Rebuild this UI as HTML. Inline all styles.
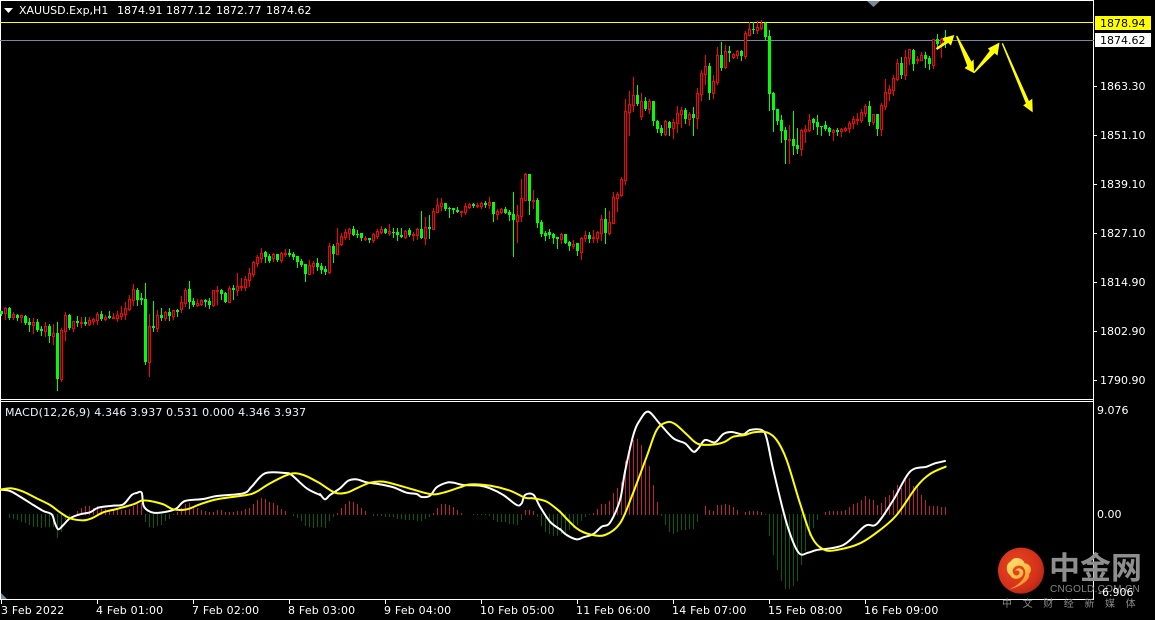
<!DOCTYPE html>
<html><head><meta charset="utf-8"><style>
html,body{margin:0;padding:0;background:#000;width:1155px;height:620px;overflow:hidden}
svg{display:block}
text{font-family:"DejaVu Sans","Liberation Sans",sans-serif;font-size:11px;fill:#fff}
.l{font-family:"Noto Sans CJK SC","Liberation Sans",sans-serif}
.t{letter-spacing:.2px}
</style></head><body>
<svg id="s" xmlns="http://www.w3.org/2000/svg" width="1155" height="620" viewBox="0 0 1155 620">
<rect width="1155" height="620" fill="#000"/>
<g fill="#fff" shape-rendering="crispEdges">
<rect x="0" y="0" width="1094" height="1"/>
<rect x="0" y="0" width="1" height="600"/>
<rect x="1093" y="0" width="1" height="600"/>
<rect x="0" y="399" width="1094" height="1"/>
<rect x="0" y="401" width="1094" height="1"/>
<rect x="0" y="599" width="1094" height="1"/>
<rect x="1094" y="86" width="3" height="1"/><rect x="1094" y="135" width="3" height="1"/><rect x="1094" y="184" width="3" height="1"/><rect x="1094" y="233" width="3" height="1"/><rect x="1094" y="282" width="3" height="1"/><rect x="1094" y="331" width="3" height="1"/><rect x="1094" y="380" width="3" height="1"/>
<rect x="1" y="600" width="1" height="4"/><rect x="97" y="600" width="1" height="4"/><rect x="193" y="600" width="1" height="4"/><rect x="289" y="600" width="1" height="4"/><rect x="385" y="600" width="1" height="4"/><rect x="481" y="600" width="1" height="4"/><rect x="577" y="600" width="1" height="4"/><rect x="673" y="600" width="1" height="4"/><rect x="769" y="600" width="1" height="4"/><rect x="865" y="600" width="1" height="4"/>
</g>
<rect x="0" y="22" width="1094" height="1" fill="#ffff00" shape-rendering="crispEdges"/>
<rect x="0" y="40" width="1094" height="1" fill="#778899" shape-rendering="crispEdges"/>
<polygon points="867,1 880,1 873.5,7" fill="#778899"/>
<polygon points="1,593 1,599 7,599" fill="#778899"/>
<g id="hist" shape-rendering="crispEdges"></g>
<g id="candles" shape-rendering="crispEdges"></g>

<g fill="none" stroke-linejoin="round" stroke-linecap="round">
<g transform="translate(0,395) scale(.33333)" stroke-width="6">
<polyline stroke="#fff" points="0,284 30,288 60,305 100,330 130,348 155,358 165,385 175,403 190,390 210,370 240,358 270,352 295,338 340,332 370,328 395,300 410,294 425,293 432,335 460,353 500,350 530,340 555,318 610,312 650,303 730,295 755,275 795,235 855,234 875,240 920,280 960,300"/>
<polyline stroke="#ff0" points="0,284 35,280 70,290 110,310 150,330 180,352 210,370 250,376 275,370 310,352 350,342 400,328 425,317 450,318 490,328 520,343 560,343 600,328 650,313 740,300 770,290 810,265 870,237 910,240 960,265"/>
</g>
<g transform="translate(320,450) scale(.33333)" stroke-width="6">
<polyline stroke="#fff" points="0,132 15,148 30,135 60,115 85,92 110,88 140,97 180,103 220,112 260,128 290,132 305,141 330,137 350,112 380,98 400,98 430,105 480,107 510,115 550,135 590,165 605,160 615,135 640,134 660,170 690,215 720,238"/>
<polyline stroke="#ff0" points="0,100 45,128 80,128 110,115 150,98 190,95 250,110 330,132 370,128 420,112 450,103 510,107 570,122 615,143 640,145 680,155 720,185"/>
</g>
<g transform="translate(560,400) scale(.33333)" stroke-width="6">
<polyline stroke="#fff" points="0,387 20,405 50,418 70,412 100,402 125,380 150,368 180,300 195,215 220,105 240,60 265,35 300,72 340,115 375,130 400,155 415,145 435,120 465,127 490,102 515,96 550,103 570,90 605,90 620,115 640,210 680,370 715,457 745,458 770,450 850,435 915,378 950,372 1000,300 1050,215 1100,200 1125,190 1155,183"/>
<polyline stroke="#ff0" points="0,335 50,385 90,403 135,405 180,370 215,290 260,170 290,90 320,67 345,72 380,103 415,132 465,133 495,125 520,110 555,105 580,97 620,97 650,120 680,180 720,310 755,410 790,448 830,450 900,430 960,390 1010,345 1070,260 1110,222 1157,200"/>
</g>
</g>

<g transform="translate(900,0) scale(.33333)" fill="#ffff00" stroke="#ff0" stroke-width="4" stroke-linejoin="miter">
<polygon points="110,145 136,126 130,116 160,108 152,133 145,126 112,147"/>
<polygon points="170,108 214,188 219,183 220,216 197,204 204,198"/>
<polygon points="222,218 272,152 267,146 296,131 291,163 284,157"/>
<polygon points="307,130 386,306 395,300 396,333 373,316 380,311"/>
</g>

<polygon points="4,8 13,8 8.5,13" fill="#fff"/>
<text x="19" y="14">XAUUSD.Exp,H1</text>
<text x="117" y="14">1874.91</text><text x="166" y="14">1877.12</text><text x="216" y="14">1872.77</text><text x="266" y="14">1874.62</text>
<text x="5" y="416" style="letter-spacing:.16px;fill:#e8f4ff">MACD(12,26,9) 4.346 3.937 0.531 0.000 4.346 3.937</text>

<rect x="1095" y="16" width="56" height="14" fill="#ffff00"/>
<text x="1100" y="27" style="fill:#000">1878.94</text>
<rect x="1095" y="33" width="56" height="14" fill="#fff"/>
<text x="1100" y="44" style="fill:#000">1874.62</text>
<text x="1100" y="90">1863.30</text>
<text x="1100" y="139">1851.10</text>
<text x="1100" y="188">1839.10</text>
<text x="1100" y="237">1827.10</text>
<text x="1100" y="286">1814.90</text>
<text x="1100" y="335">1802.90</text>
<text x="1100" y="384">1790.90</text>
<text x="1097" y="414">9.076</text>
<text x="1097" y="518">0.00</text>

<text class="t" x="1" y="614">3 Feb 2022</text>
<text class="t" x="96" y="614">4 Feb 01:00</text>
<text class="t" x="192" y="614">7 Feb 02:00</text>
<text class="t" x="288" y="614">8 Feb 03:00</text>
<text class="t" x="384" y="614">9 Feb 04:00</text>
<text class="t" x="480" y="614">10 Feb 05:00</text>
<text class="t" x="576" y="614">11 Feb 06:00</text>
<text class="t" x="672" y="614">14 Feb 07:00</text>
<text class="t" x="768" y="614">15 Feb 08:00</text>
<text class="t" x="864" y="614">16 Feb 09:00</text>

<defs>
<radialGradient id="rg" cx=".4" cy=".4" r=".7"><stop offset="0" stop-color="#e8481e"/><stop offset=".7" stop-color="#d4301a"/><stop offset="1" stop-color="#a82414"/></radialGradient>
<linearGradient id="yg" x1="0" y1="0" x2=".6" y2="1"><stop offset="0" stop-color="#ffe27a"/><stop offset=".6" stop-color="#fbbf45"/><stop offset="1" stop-color="#ef8a22"/></linearGradient>
</defs>
<g transform="translate(960,530) scale(.33333)">
<circle cx="183" cy="122" r="69" fill="url(#rg)"/>
<path fill="url(#yg)" d="M145,178 C180,172 212,150 207,132 C220,120 210,100 194,100 C188,82 160,78 152,95 C138,100 136,125 150,135 C158,152 185,150 190,130 C192,114 170,110 166,122 C178,118 182,128 176,134 C168,140 158,134 158,122 C160,108 180,102 190,112 C200,124 196,140 185,152 C173,166 158,174 145,178 Z"/>
</g>
<text class="l" x="1049" y="579" style="font-family:'Noto Sans CJK SC','Liberation Sans',sans-serif;font-size:31px;font-weight:700;fill:#8e8e8e">中金网</text>
<text x="1050" y="592" style="font-family:'Liberation Sans',sans-serif;font-size:10px;letter-spacing:.3px;fill:#858585">CNGOLD.COM.CN</text>
<text x="1098" y="596">-6.906</text>
<text class="l" x="1002" y="607" style="font-family:'Noto Sans CJK SC','Liberation Sans',sans-serif;font-size:10px;letter-spacing:10.6px;fill:#8a8a8a">中文财经新媒体</text>
</svg>
<script>
var NS="http://www.w3.org/2000/svg",C=document.getElementById("candles"),H=document.getElementById("hist");
function R(p,x,y,w,h,f){if(h<=0)return;var r=document.createElementNS(NS,"rect");r.setAttribute("x",x);r.setAttribute("y",y);r.setAttribute("width",w);r.setAttribute("height",h);r.setAttribute("fill",f);p.appendChild(r)}
var S=[
[0,270,"g122,124,133,136 r112,115,130,148 g111,114,143,146 r125,132,141,148 g133,136,144,150 r135,136,140,156 g136,138,159,162 g144,156,165,183 r143,156,165,189 g148,156,179,183 g168,177,183,195 r155,168,183,197 g162,168,198,216 r162,190,197,222 g156,189,327,360 r175,180,327,333 r126,135,182,210 g132,135,174,177 r153,153,173,183 g138,153,159,168 r141,157,159,172 g141,156,162,165 r141,150,162,165 r144,147,153,162 r126,132,150,162 g123,132,147,150 r136,141,146,150 g123,138,144,144 r129,141,142,144 r123,135,144,153 r108,129,138,147 r96,114,132,147 r75,87,117,120 r42,57,90,105 g54,60,90,105 g69,84,90,102 g39,87,276,282 r132,168,276,318 g93,168,175,183 r120,135,174,183 g114,135,144,150 r123,126,144,150 g114,126,138,150 r120,120,138,147 g117,120,126,138 r78,96,117,126 r54,60,99,108 g33,57,96,114 g84,93,105,108 r87,99,105,108 r87,90,102,105 g87,90,96,108 g84,93,105,114 r60,60,105,108 r48,60,62,102 g57,60,72,87 g66,69,96,96 r48,54,96,96 g45,54,60,87 r9,48,60,75"],
[60,180,"r295,319,320,330 r288,298,320,330 r265,280,300,318 r243,247,282,288 r225,232,248,258 r205,220,234,245 g213,216,231,246 g222,228,243,246 r218,222,234,243 g222,222,240,243 r216,219,240,246 r207,219,220,228 g207,219,225,228 g216,222,231,237 g228,228,246,261 g237,243,255,258 g252,252,282,303 r240,255,282,282 r243,249,258,279 g234,249,261,270 g249,258,270,279 g258,267,276,282 r189,198,276,279 g192,198,222,246 r144,189,222,222 r160,168,192,195 r147,156,171,177 r144,147,159,177 g138,147,165,165 g150,162,165,171 g159,159,174,180 r168,174,176,180 g174,174,180,186 r159,162,180,186 r147,153,168,174 r138,147,156,159 g144,147,159,159 r132,153,158,165 g144,156,159,171 g144,156,165,180 g144,165,171,171 r150,153,171,174 g144,150,165,168 r156,162,165,180 r144,147,165,177 g93,147,174,174 r111,141,174,192 g105,141,147,174 r84,93,147,147 r54,75,96,96 r54,69,78,90 g69,69,87,90 g81,84,87,111 g84,84,90,99 g81,90,96,96 r93,93,95,108 r69,78,96,102 r69,72,81,84 g69,72,78,81 r69,74,76,81 r66,69,78,84 g63,69,75,81 r51,66,75,84 g66,66,102,123 r87,93,102,117"],
[125,160,"r144,147,156,159 g141,147,159,159 g150,156,165,180 g96,162,180,288 r135,165,183,246 r57,114,168,183 r39,42,120,120 g42,42,123,162 r90,120,122,144 g114,120,189,201 g180,186,222,228 g213,219,228,240 g207,216,225,234 g219,222,234,249 g231,231,237,264 r219,222,237,249 g222,222,249,249 g243,246,258,270 r240,252,258,264 g249,249,273,285 r231,234,276,297 r213,225,234,243 g216,225,237,246 r210,232,233,246 r213,216,234,246 r165,177,219,240 g144,177,219,249 r153,186,219,222 r96,111,189,189 r96,102,114,153 r51,57,105,108"],
[156,10,"r267,303,510,522 r243,282,306,375 r201,255,285,303 g225,255,282,285 r249,273,318,327 g261,273,297,300 r267,273,297,309 g273,273,333,345 g330,333,357,366 g345,354,369,375 r330,333,372,375 g333,336,354,375 r327,336,354,384 r288,309,339,366 r291,300,312,351 g294,300,327,339 r306,312,327,345 g291,312,324,375 r234,249,324,354 r180,189,252,270 r135,168,192,222 g159,168,249,267 r195,213,249,264 r111,135,216,222 g96,135,174,180 r105,123,171,174 g108,123,129,153 r129,132,141,144 r120,123,135,144 g120,123,138,150 r63,69,138,144 r36,57,75,75 g36,57,60,69 r33,51,60,69 r30,39,54,57 g36,39,81,87 g60,78,252,300 g246,249,300,363 g297,297,333,342 g315,330,363,396 g351,360,390,459 r345,387,389,459 g303,387,408,432 g354,405,417,429 r357,360,417,435 r345,357,363,396 r312,330,360,363 g324,327,339,357 g315,336,351,372 g348,348,351,375 g333,345,357,360 g351,354,366,375 r357,360,366,390 g354,360,366,375"],
[210,40,"r264,267,273,288 r261,264,270,273 r243,249,265,276 r228,237,250,264 r219,238,239,252 r207,216,240,246 r192,198,219,228 g183,198,246,255 r222,222,246,252 g222,222,267,285 r189,195,267,285 r117,156,198,207 r135,147,159,180 r105,114,150,165 r57,69,117,120 g51,69,105,114 r30,51,105,117 r27,28,54,72 g27,30,72,90 r48,57,58,69 r36,45,60,60 g36,45,57,81 g48,54,72,87"],
[233,0,"r118,118,195,205 g102,118,132,145 r113,118,130,172 g90,112,120,142"]
];
S.forEach(function(s){s[2].split(" ").forEach(function(c,k){
 var i=s[0]+k,red=c[0]=="r",v=c.slice(1).split(",").map(function(n){return Math.round(s[1]+n/3)});
 var col=red?"#ff0000":"#00ff00",x=4*i,h=v[0],t=v[1],b=Math.max(v[2],v[1]+1),l=Math.max(v[3],b);
 R(C,x+1,h,1,t-h,col);R(C,x+1,b,1,l-b+1,col);
 R(C,x,t,3,b-t+(red?1:0),col);
 if(red&&b-t>1)R(C,x+1,t+1,1,b-t-1,"#000");
})});
var D=[0,0,-4,-5,-6,-8,-9,-11,-13,-13,-14,-13,-13,-13,-24,-18,-6,-4,0,3,6,8,8,6,8,6,5,3,4,4,4,4,5,8,10,11,-8,-13,-14,-12,-11,-7,-5,-1,2,6,10,11,7,6,4,3,2,2,4,4,2,2,2,3,3,5,6,10,14,16,15,12,11,9,5,3,0,-2,-4,-7,-12,-13,-14,-13,
-13,-14,-7,-3,1,6,10,13,12,10,6,3,0,-2,-2,-2,-3,-3,-3,-5,-5,-6,-6,-6,-7,-7,-5,-3,1,6,10,10,9,7,4,1,0,0,-1,-1,-1,-1,-2,-6,-8,-8,-8,-10,-10,-11,-6,4,4,3,-3,
-12,-18,-20,-22,-22,
-20,-19,-16,-14,-11,-7,-3,-1,1,5,10,10,13,21,26,32,53,68,74,75,69,54,48,29,12,-2,-11,-18,-20,-18,-16,-16,-15,-15,-8,0,8,4,3,9,9,10,9,7,4,0,2,3,3,3,2,-1,-22,-41,-56,-67,-75,-75,-72,-67,-51,-37,-22,-14,-6,0,2,3,3,3,3,4,7,10,11,14,18,15,14,9,11,17,19,24,29,26,34,36,28,27,19,14,8,8,8,7,7];
D.forEach(function(d,i){var x=1+4*i;
 if(d>0)R(H,x,514-d,1,d+1,"#c41e3a");
 else if(d<0)R(H,x,514,1,-d,"#0a5c0a");
});
/* smooth MACD polylines */
Array.prototype.slice.call(document.querySelectorAll("polyline")).forEach(function(pl){
 var p=pl.getAttribute("points").split(" ").map(function(a){return a.split(",").map(Number)});
 var d="M"+p[0][0]+","+p[0][1];
 for(var i=0;i<p.length-1;i++){
  var a=p[Math.max(i-1,0)],b=p[i],c=p[i+1],e=p[Math.min(i+2,p.length-1)];
  d+="C"+(b[0]+(c[0]-a[0])/6)+","+(b[1]+(c[1]-a[1])/6)+" "+(c[0]-(e[0]-b[0])/6)+","+(c[1]-(e[1]-b[1])/6)+" "+c[0]+","+c[1];
 }
 var q=document.createElementNS(NS,"path");q.setAttribute("d",d);q.setAttribute("stroke",pl.getAttribute("stroke"));
 pl.parentNode.replaceChild(q,pl);
});
</script>
</body></html>
